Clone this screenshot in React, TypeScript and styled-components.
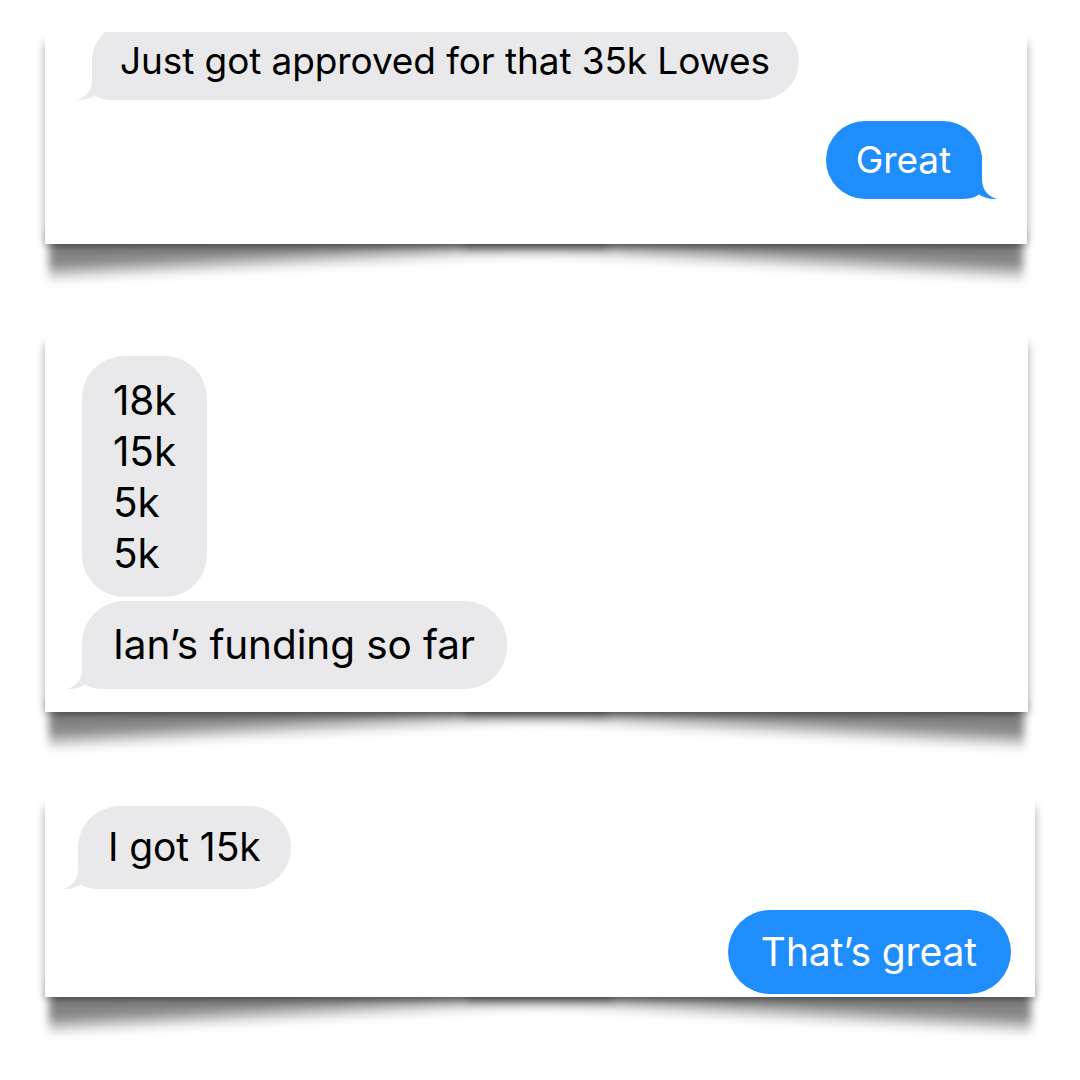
import React from 'react';
import styled, { createGlobalStyle } from 'styled-components';

const Global = createGlobalStyle`
  html {
    margin: 0;
    padding: 0;
    background: #ffffff;
  }
  body {
    margin: 0;
    padding: 0;
    background: transparent;
    font-family: Inter, "Liberation Sans", Arial, sans-serif;
    -webkit-font-smoothing: antialiased;
  }
`;

const Page = styled.main`
  display: flex;
  flex-direction: column;
  align-items: flex-start;
  padding: 32px 0 0 45px;
  width: 1080px;
  height: 1080px;
  box-sizing: border-box;
`;

const Card = styled.section<{ $w: number; $top: number }>`
  position: relative;
  width: ${(p) => p.$w}px;
  margin-top: ${(p) => p.$top}px;
  box-shadow: -5px 6px 8px -4px rgba(0, 0, 0, 0.28), 5px 6px 8px -4px rgba(0, 0, 0, 0.28);

  &::before,
  &::after {
    content: '';
    position: absolute;
    z-index: -1;
    bottom: -40px;
    height: 54px;
    width: 57%;
    background: linear-gradient(
      to bottom,
      rgba(0, 0, 0, 0.5) 0%,
      rgba(0, 0, 0, 0.48) 62%,
      rgba(0, 0, 0, 0.12) 88%,
      rgba(0, 0, 0, 0) 100%
    );
    filter: blur(4px);
  }
  &::before {
    left: 4px;
    transform-origin: left bottom;
    transform: skewY(-3.1deg);
  }
  &::after {
    right: 4px;
    transform-origin: right bottom;
    transform: skewY(3.1deg);
  }
`;

const Thread = styled.div<{ $pad: string; $gap: number; $size: number; $lh: number }>`
  display: flex;
  flex-direction: column;
  gap: ${(p) => p.$gap}px;
  padding: ${(p) => p.$pad};
  background: #ffffff;
  overflow: hidden;
  font-size: ${(p) => p.$size}px;
  line-height: ${(p) => p.$lh}px;
  letter-spacing: -0.1px;
`;

const Bubble = styled.div<{ $sent?: boolean; $pad: string; $shift?: number }>`
  position: relative;
  align-self: ${(p) => (p.$sent ? 'flex-end' : 'flex-start')};
  margin-top: ${(p) => p.$shift ?? 0}px;
  padding: ${(p) => p.$pad};
  border-radius: 42px;
  background: ${(p) => (p.$sent ? '#1f8dfb' : '#e9e9eb')};
  color: ${(p) => (p.$sent ? '#ffffff' : '#000000')};
  white-space: nowrap;
`;

const Label = styled.span`
  position: relative;
  z-index: 1;
`;

const Lines = styled.div`
  position: relative;
  z-index: 1;
  display: flex;
  flex-direction: column;
`;

const TailSvg = styled.svg<{ $sent?: boolean }>`
  position: absolute;
  bottom: 0;
  width: 58px;
  height: 44px;
  ${(p) => (p.$sent ? 'right: -15px; transform: scaleX(-1);' : 'left: -15px;')}
`;

const Tail: React.FC<{ sent?: boolean }> = ({ sent }) => (
  <TailSvg $sent={sent} viewBox="0 0 58 44">
    <path
      d="M15 0 L15 24 C15 34 10 41 0 44 C7 44.5 13 42.5 18 39.5 C22 42.5 28 44 36 44 L58 44 L58 0 Z"
      fill={sent ? '#1f8dfb' : '#e9e9eb'}
    />
  </TailSvg>
);

export default function App() {
  return (
    <>
      <Global />
      <Page>
        <Card $w={982} $top={0}>
          <Thread $pad="0 45px 45px 47px" $gap={21} $size={37} $lh={44}>
            <Bubble $pad="17px 29px 17px 28px" $shift={-10}>
              <Tail />
              <Label>Just got approved for that 35k Lowes</Label>
            </Bubble>
            <Bubble $sent $pad="17px 31px 17px 30px">
              <Tail sent />
              <Label>Great</Label>
            </Bubble>
          </Thread>
        </Card>

        <Card $w={983} $top={90}>
          <Thread $pad="22px 0 23px 37px" $gap={4} $size={40.5} $lh={51}>
            <Bubble $pad="19px 31px 18px 31px">
              <Lines>
                <span>18k</span>
                <span>15k</span>
                <span>5k</span>
                <span>5k</span>
              </Lines>
            </Bubble>
            <Bubble $pad="18px 32px 19px 31px">
              <Tail />
              <Label>Ian’s funding so far</Label>
            </Bubble>
          </Thread>
        </Card>

        <Card $w={990} $top={85}>
          <Thread $pad="9px 24px 3px 33px" $gap={21} $size={39} $lh={46}>
            <Bubble $pad="18px 30px 19px 30px">
              <Tail />
              <Label>I got 15k</Label>
            </Bubble>
            <Bubble $sent $pad="19px 34px 19px 33px">
              <Label>That’s great</Label>
            </Bubble>
          </Thread>
        </Card>
      </Page>
    </>
  );
}
